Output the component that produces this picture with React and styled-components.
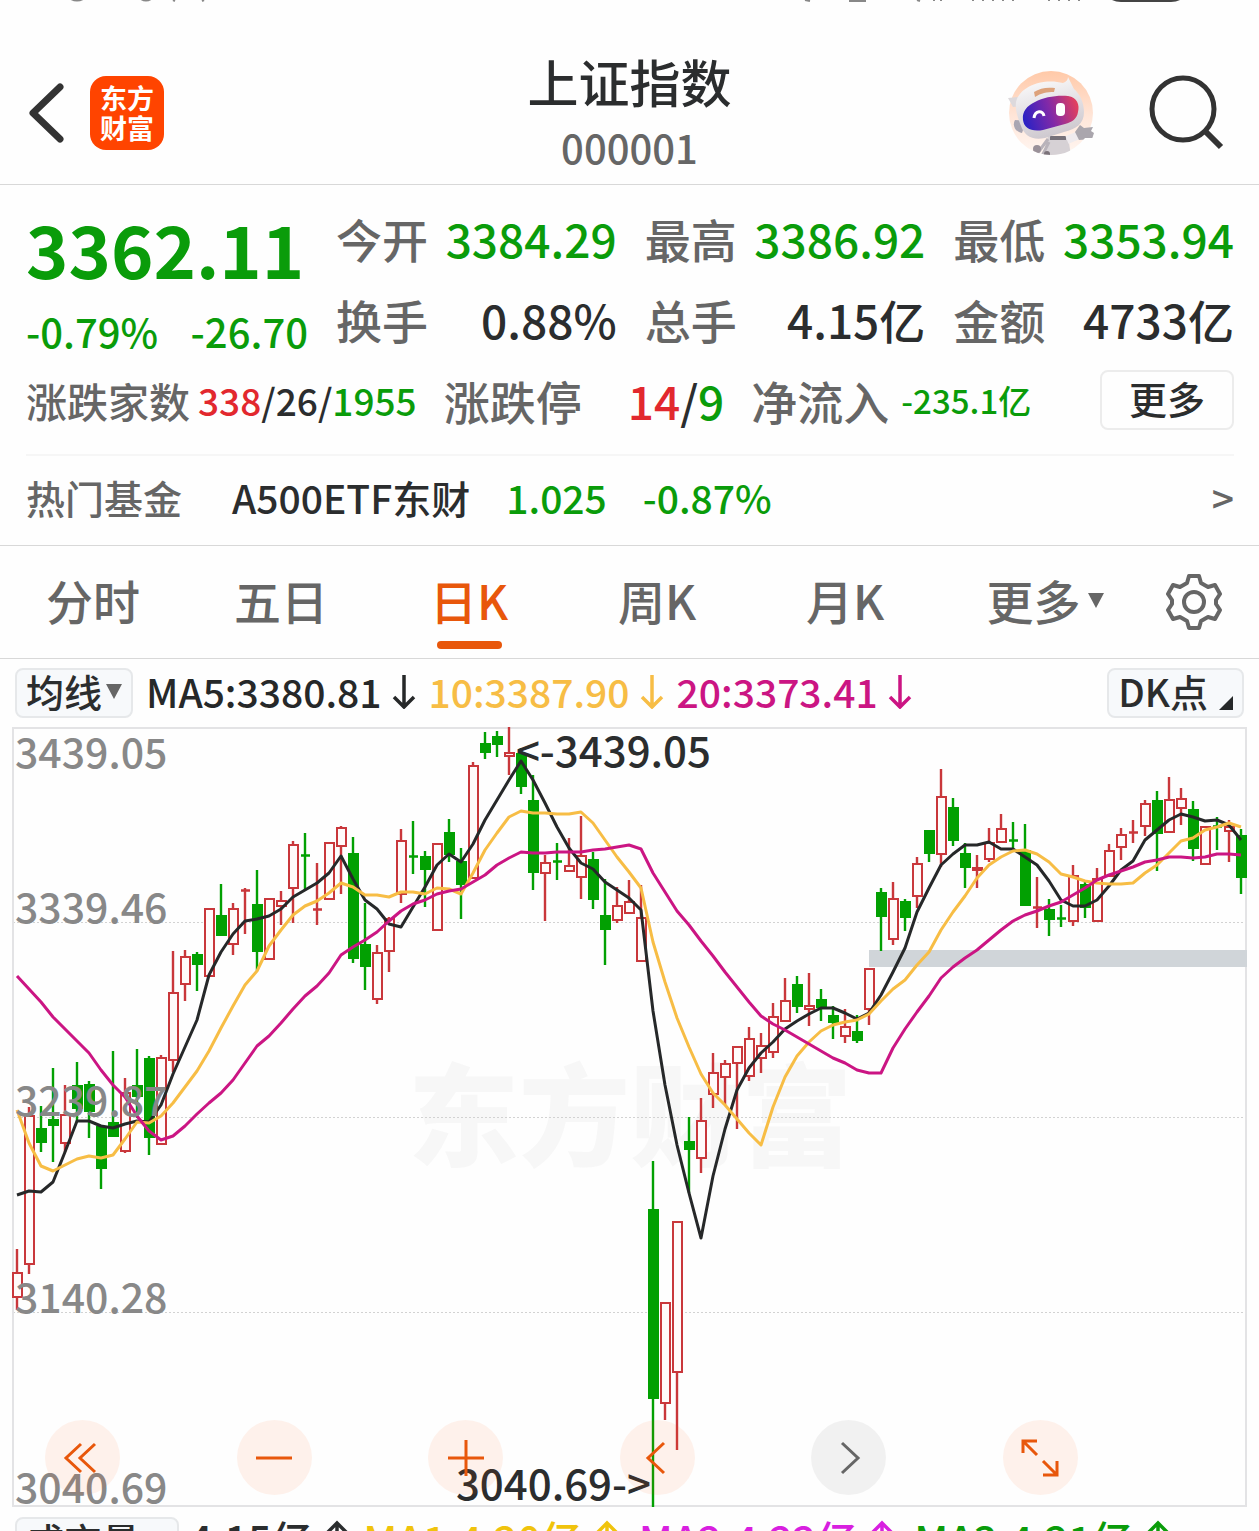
import { useState } from "react";
import { styled, createGlobalStyle } from "styled-components";

const GlobalStyle = createGlobalStyle`
	* {
		box-sizing: border-box;
	}
	body {
		margin: 0;
		background: #fefefe;
		color: #2b2d2e;
		font-family: "Noto Sans CJK SC", "Noto Sans", sans-serif;
		font-weight: 500;
	}
	button {
		font: inherit;
		color: inherit;
		background: none;
		border: 0;
		padding: 0;
		cursor: pointer;
	}
	svg {
		display: block;
	}
`;

const COLORS = {
	up: "#e2282e",
	down: "#0a9c0a",
	text: "#2b2d2e",
	label: "#666666",
	accent: "#e8570b",
	ma5: "#262829",
	ma10: "#f7bd45",
	ma20: "#cb1583",
};

const Page = styled.div`
	height: 100vh;
	overflow: hidden;
`;

const StatusBar = styled.div`
	display: flex;
	justify-content: space-between;
	height: 3px;
	overflow: hidden;
	padding: 0 78px 0 68px;
`;

const Header = styled.header`
	display: grid;
	grid-template-columns: 1fr auto 1fr;
	align-items: center;
	padding: 46px 26px 8px;
	border-bottom: 1px solid #d8d8d8;
`;

const HeaderSide = styled.div`
	display: flex;
	align-items: center;
	justify-content: ${(props) => (props.$end ? "flex-end" : "flex-start")};
	gap: ${(props) => (props.$end ? "54px" : "22px")};
	padding-right: ${(props) => (props.$end ? "8px" : "0")};
`;

const Logo = styled.a`
	width: 74px;
	height: 74px;
	padding-top: 7px;
	border-radius: 16px;
	background: #ff4400;
	color: white;
	font-size: 27px;
	font-weight: 700;
	line-height: 30px;
	text-align: center;
	text-decoration: none;
`;

const Heading = styled.div`
	padding-bottom: 5px;
	text-align: center;
`;

const Title = styled.h1`
	margin: 0 0 10px;
	font-size: 51px;
	font-weight: 500;
	line-height: 64px;
`;

const Code = styled.div`
	color: #666666;
	font-size: 40px;
	line-height: 48px;
`;

const Quote = styled.section`
	padding: 13px 25px 0 26px;
	border-bottom: 1px solid #d8d8d8;
`;

const Summary = styled.div`
	display: grid;
	grid-template-columns: 282px 1fr;
	gap: 28px;
`;

const Price = styled.div`
	margin: 10px 0 14px;
	color: ${COLORS.down};
	font-size: 72px;
	font-weight: 700;
	line-height: 80px;
`;

const Change = styled.div`
	display: flex;
	justify-content: space-between;
	color: ${COLORS.down};
	font-size: 40px;
	line-height: 58px;
`;

const Stats = styled.dl`
	display: grid;
	grid-template-columns: repeat(3, 1fr);
	column-gap: 28px;
	margin: 0;
	font-size: 46px;
	line-height: 81px;
`;

const Stat = styled.div`
	display: flex;
	justify-content: space-between;
	white-space: nowrap;
`;

const Label = styled.dt`
	color: ${COLORS.label};
`;

const Value = styled.dd`
	margin: 0;
	color: ${(props) => COLORS[props.$tone || "text"]};
`;

const Breadth = styled.div`
	display: flex;
	align-items: center;
	height: 80px;
	margin-bottom: 14px;
	white-space: nowrap;
`;

const BreadthItem = styled.div`
	display: flex;
	align-items: center;
	gap: ${(props) => props.$gap}px;
	margin-right: 27px;
	font-size: ${(props) => props.$size}px;
`;

const Figure = styled.span`
	font-size: ${(props) => props.$size}px;
	color: ${(props) => COLORS[props.$tone || "text"]};
`;

const MoreButton = styled.button`
	width: 134px;
	height: 60px;
	margin-left: auto;
	padding-bottom: 5px;
	border: 2px solid #ececec;
	border-radius: 8px;
	font-size: 38px;
	line-height: 50px;
`;

const Fund = styled.a`
	display: flex;
	align-items: center;
	height: 91px;
	padding-bottom: 8px;
	border-top: 2px solid #f6f6f6;
	color: ${COLORS.text};
	font-size: 39px;
	text-decoration: none;
`;

const FundLabel = styled.span`
	margin-right: 50px;
	color: ${COLORS.label};
`;

const FundValue = styled.span`
	margin-left: 36px;
	color: ${COLORS.down};
`;

const FundArrow = styled.span`
	margin-left: auto;
	color: ${COLORS.label};
`;

const Tabs = styled.nav`
	display: grid;
	grid-template-columns: repeat(5, 188fr) 212fr 107fr;
	height: 113px;
	border-bottom: 1px solid #d8d8d8;
`;

const Tab = styled.button`
	position: relative;
	display: flex;
	align-items: center;
	justify-content: center;
	gap: 7px;
	padding: 0 2px 5px 0;
	font-size: 47px;
	color: ${(props) => (props.$active ? COLORS.accent : COLORS.label)};
	&::after {
		content: "";
		display: ${(props) => (props.$active ? "block" : "none")};
		position: absolute;
		bottom: 9px;
		width: 65px;
		height: 8px;
		border-radius: 4px;
		background: ${COLORS.accent};
	}
`;

const GearButton = styled.button`
	padding-left: 14px;
`;

const Toolbar = styled.div`
	display: flex;
	align-items: center;
	height: 68px;
	padding: 0 15px;
	font-size: 39px;
	white-space: nowrap;
`;

const Chip = styled.button`
	display: flex;
	align-items: center;
	justify-content: center;
	gap: ${(props) => props.$gap || 4}px;
	height: 50px;
	padding: 0 9px 5px;
	border: 2px solid #e6e8ea;
	border-radius: 8px;
	background: #f7f9fb;
	font-size: 38px;
	line-height: 42px;
`;

const Average = styled.span`
	display: flex;
	align-items: center;
	gap: 10px;
	margin-left: 13px;
	padding-bottom: 5px;
	color: ${(props) => props.$color};
`;

const Push = styled.div`
	margin-left: auto;
`;

const ChartArea = styled.div`
	position: relative;
	margin: 0 12px;
`;

const ChartSvg = styled.svg`
	width: 100%;
	height: auto;
`;

const Controls = styled.div`
	position: absolute;
	left: 0;
	right: 0;
	bottom: 12px;
	display: flex;
	justify-content: space-between;
	padding: 0 169px 0 33px;
`;

const RoundButton = styled.button`
	display: grid;
	place-items: center;
	width: 75px;
	height: 75px;
	border-radius: 50%;
	color: ${(props) => (props.$muted ? "#666666" : COLORS.accent)};
	background: ${(props) =>
		props.$muted ? "rgba(0, 0, 0, 0.05)" : "rgba(255, 90, 10, 0.08)"};
`;

const VolumeBar = styled.div`
	display: flex;
	align-items: flex-start;
	margin-top: 10px;
	padding: 0 15px;
	font-size: 41px;
	line-height: 42px;
	white-space: nowrap;
`;

const VolumeValue = styled.span`
	display: flex;
	align-items: center;
	gap: 13px;
	margin-left: ${(props) => props.$gap}px;
	color: ${(props) => props.$color};
`;

const STATS = [
	{ label: "今开", value: "3384.29", tone: "down" },
	{ label: "最高", value: "3386.92", tone: "down" },
	{ label: "最低", value: "3353.94", tone: "down" },
	{ label: "换手", value: "0.88%" },
	{ label: "总手", value: "4.15亿" },
	{ label: "金额", value: "4733亿" },
];

const TABS = ["分时", "五日", "日K", "周K", "月K", "更多"];

// high, body top, body bottom, low, rising (1) or falling (0)
const CANDLES = [
	[1249, 1272, 1297, 1310, 1], [1107, 1115, 1264, 1274, 1],
	[1106, 1128, 1142, 1152, 0], [1068, 1119, 1125, 1162, 0],
	[1085, 1114, 1143, 1152, 1], [1062, 1085, 1108, 1122, 0],
	[1081, 1084, 1111, 1138, 0], [1126, 1126, 1168, 1189, 0],
	[1051, 1122, 1136, 1137, 0], [1078, 1092, 1151, 1153, 1],
	[1049, 1085, 1096, 1118, 0], [1056, 1058, 1137, 1155, 0],
	[1055, 1057, 1144, 1144, 1], [951, 992, 1060, 1072, 1],
	[950, 956, 984, 1001, 1], [952, 954, 964, 991, 0],
	[908, 908, 976, 976, 1], [884, 915, 935, 935, 0],
	[903, 908, 944, 955, 1], [888, 890, 891, 934, 1],
	[870, 904, 951, 971, 0], [898, 898, 959, 959, 1],
	[891, 900, 906, 925, 1], [841, 844, 888, 923, 1],
	[833, 855, 856, 890, 0], [863, 909, 910, 925, 1],
	[842, 842, 899, 899, 1], [826, 827, 846, 894, 1],
	[837, 853, 958, 963, 0], [903, 944, 966, 990, 0],
	[945, 952, 999, 1004, 1], [917, 918, 951, 972, 1],
	[829, 840, 894, 903, 1], [821, 856, 857, 874, 0],
	[851, 856, 869, 907, 0], [843, 843, 930, 930, 1],
	[819, 832, 854, 862, 0], [848, 861, 884, 919, 0],
	[762, 765, 878, 878, 1], [732, 743, 752, 759, 0],
	[731, 736, 744, 757, 0], [727, 752, 756, 775, 1],
	[748, 753, 786, 794, 0], [775, 800, 872, 890, 0],
	[855, 862, 873, 921, 1], [843, 861, 863, 880, 0],
	[838, 865, 871, 872, 1], [816, 855, 877, 899, 1],
	[852, 859, 899, 909, 0], [879, 915, 929, 965, 0],
	[887, 905, 920, 923, 1], [880, 901, 913, 914, 1],
	[885, 917, 961, 961, 1], [1161, 1209, 1398, 1507, 0],
	[1302, 1302, 1403, 1420, 1], [1221, 1221, 1372, 1450, 1],
	[1117, 1141, 1149, 1193, 0], [1098, 1120, 1158, 1173, 1],
	[1053, 1072, 1094, 1108, 1], [1060, 1063, 1077, 1105, 1],
	[1046, 1046, 1063, 1129, 1], [1027, 1038, 1076, 1081, 1],
	[1033, 1045, 1058, 1073, 1], [1003, 1016, 1052, 1058, 1],
	[978, 1000, 1021, 1021, 1], [976, 984, 1006, 1013, 0],
	[973, 1005, 1009, 1026, 1], [989, 999, 1007, 1021, 0],
	[1006, 1015, 1022, 1039, 0], [1009, 1026, 1036, 1043, 1],
	[1015, 1031, 1040, 1043, 0], [968, 968, 1009, 1025, 1],
	[888, 892, 916, 951, 0], [882, 898, 939, 945, 1],
	[899, 901, 917, 931, 0], [857, 863, 896, 908, 1],
	[830, 830, 853, 862, 0], [769, 796, 854, 867, 1],
	[798, 807, 840, 846, 0], [843, 853, 867, 888, 0],
	[855, 867, 870, 888, 1], [828, 842, 859, 862, 1],
	[814, 828, 842, 842, 1], [822, 840, 841, 850, 0],
	[824, 850, 905, 905, 0], [877, 907, 908, 928, 1],
	[899, 909, 919, 936, 0], [905, 918, 920, 927, 0],
	[865, 875, 921, 926, 1], [882, 884, 907, 918, 0],
	[868, 878, 921, 921, 1], [844, 850, 876, 876, 1],
	[828, 834, 847, 860, 1], [820, 832, 834, 843, 1],
	[800, 803, 826, 836, 1], [791, 800, 833, 871, 0],
	[777, 799, 832, 832, 1], [788, 798, 808, 825, 1],
	[801, 809, 848, 861, 0], [826, 826, 864, 864, 1],
	[817, 826, 827, 850, 0], [820, 826, 831, 862, 1],
	[829, 835, 877, 894, 0],
];

const MA5 = [
	1195, 1191, 1192, 1182, 1152, 1121, 1121, 1126, 1128, 1124, 1121, 1122, 1105,
	1074, 1047, 1020, 975, 952, 934, 921, 919, 916, 909, 897, 890, 883, 873, 856,
	879, 900, 909, 924, 927, 907, 887, 865, 854, 862, 844, 820, 800, 780, 761,
	780, 803, 827, 848, 863, 869, 882, 890, 898, 910, 1011, 1085, 1145, 1193,
	1238, 1176, 1129, 1090, 1068, 1053, 1042, 1029, 1021, 1014, 1008, 1008, 1013,
	1019, 1013, 995, 972, 948, 912, 888, 865, 854, 845, 845, 842, 849, 849, 857,
	865, 881, 900, 906, 906, 900, 886, 870, 861, 840, 830, 820, 814, 817, 821,
	820, 825, 840,
];

const MA10 = [
	1110, 1143, 1166, 1171, 1165, 1159, 1156, 1158, 1155, 1139, 1122, 1123, 1116,
	1103, 1087, 1071, 1051, 1028, 1006, 985, 971, 946, 930, 915, 906, 901, 893,
	883, 887, 895, 895, 897, 892, 892, 894, 888, 889, 894, 873, 850, 833, 817,
	811, 813, 813, 814, 814, 812, 823, 840, 857, 872, 888, 942, 982, 1018, 1047,
	1074, 1093, 1105, 1119, 1133, 1145, 1107, 1077, 1056, 1042, 1031, 1025, 1022,
	1020, 1014, 1001, 989, 980, 965, 952, 930, 912, 896, 878, 865, 857, 851, 850,
	854, 862, 874, 877, 881, 883, 884, 884, 883, 873, 865, 853, 841, 838, 830,
	827, 823, 827,
];

const MA20 = [
	976, 989, 1002, 1017, 1029, 1041, 1053, 1070, 1085, 1097, 1116, 1131, 1140,
	1136, 1126, 1114, 1103, 1093, 1080, 1063, 1046, 1036, 1023, 1009, 996, 986,
	973, 955, 947, 940, 932, 921, 911, 904, 900, 894, 891, 889, 882, 875, 865,
	858, 852, 853, 853, 852, 852, 852, 850, 849, 847, 845, 849, 873, 892, 911,
	925, 941, 956, 972, 987, 1002, 1016, 1024, 1030, 1037, 1044, 1051, 1058, 1063,
	1070, 1073, 1073, 1048, 1029, 1012, 996, 978, 967, 958, 950, 940, 930, 921,
	915, 911, 906, 902, 895, 888, 880, 875, 871, 867, 862, 860, 857, 857, 858,
	857, 854, 854, 855,
];

const AXIS = [
	{ y: 768, text: "3439.05" },
	{ y: 923, text: "3339.46" },
	{ y: 1116, text: "3239.87" },
	{ y: 1313, text: "3140.28" },
	{ y: 1503, text: "3040.69" },
];

const xAt = (index) => 17 + index * 12;
const toPoints = (values) =>
	values.map((y, index) => `${xAt(index)},${y}`).join(" ");

function Caret() {
	return (
		<svg width="16" height="16" viewBox="0 0 16 16" fill="#666666">
			<path d="M0 1h16L8 16z" />
		</svg>
	);
}

function Arrow({ up }) {
	return (
		<svg
			width="24"
			height="36"
			viewBox="0 0 24 36"
			fill="none"
			stroke="currentColor"
			strokeWidth="3.5"
		>
			<path d={up ? "M12 36V3M2 13 12 3l10 10" : "M12 2v33M2 24l10 10 10-10"} />
		</svg>
	);
}

function Robot() {
	return (
		<svg width="88" height="86" viewBox="0 0 88 86">
			<defs>
				<linearGradient id="halo" x1="0" y1="0" x2="0" y2="1">
					<stop offset="0" stopColor="#ffc9a8" />
					<stop offset="0.55" stopColor="#ffe6d9" />
					<stop offset="1" stopColor="#fff6f1" />
				</linearGradient>
				<linearGradient id="visor" x1="0" y1="0.6" x2="1" y2="0.4">
					<stop offset="0" stopColor="#2b22c4" />
					<stop offset="0.5" stopColor="#8129a8" />
					<stop offset="1" stopColor="#e2405f" />
				</linearGradient>
				<linearGradient id="shell" x1="0" y1="0" x2="0.3" y2="1">
					<stop offset="0" stopColor="#ffffff" />
					<stop offset="1" stopColor="#cfcad0" />
				</linearGradient>
				<clipPath id="haloClip">
					<path d="M0 0h88v68H78A42 42 0 0 1 10 62H0z" />
					<circle cx="44" cy="43" r="42" />
				</clipPath>
			</defs>
			<circle cx="44" cy="43" r="42" fill="url(#halo)" />
			<g clipPath="url(#haloClip)">
				<path d="M41 66h20l3 20H36z" fill="#d6d1d5" />
				<path d="M43 66h16v4H43z" fill="#77727a" />
				<path d="M41 69 30 84M35 86l7-14" stroke="#b9b3ba" strokeWidth="3" />
				<circle cx="30" cy="79" r="4" fill="#9a9199" />
				<circle cx="40" cy="84" r="3" fill="#7b7279" />
				<path d="M60 70l12-5" stroke="#efebee" strokeWidth="8" />
				<path d="M68 62l5-7 4 3 9-1-2 4 3 2-2 6-13 1z" fill="#aaa6ad" />
				<path d="M1 28l10-1 3 9-8 1z" fill="#ddd9dc" />
				<path d="M8 50c-3 5 0 12 7 13l4-12z" fill="#aaa6b2" />
				<path
					d="M9 32C13 15 38 8 56 13c3-1 5-3 5-6l6 12c6 5 10 14 10 23 0 12-8 17-20 20L38 68C25 71 17 65 14 56 11 48 8 41 9 32z"
					fill="url(#shell)"
				/>
				<path d="M27 22c6-4 13-5 21-4l-1 4c-7 0-13 1-19 5z" fill="#dda27b" />
				<path
					d="M28 32c9-5 22-7 33-6 9 1 12 9 10 16-1 7-6 10-13 12l-22 6C24 62 17 58 16 50c-1-9 4-14 12-18z"
					fill="url(#visor)"
				/>
				<path
					d="M27 48c1-8 9-8 10-2"
					fill="none"
					stroke="#ffffff"
					strokeWidth="3"
				/>
				<rect x="49" y="33" width="9" height="13" rx="4" fill="#ffffff" />
			</g>
		</svg>
	);
}

function Gear() {
	return (
		<svg
			width="56"
			height="58"
			viewBox="0 0 56 58"
			fill="none"
			stroke="#666666"
			strokeWidth="4"
			strokeLinejoin="round"
		>
			<path d="M23 3h10l2 7 7 4 7-2 5 9-4 6v4l4 6-5 9-7-2-7 4-2 7H23l-2-7-7-4-7 2-5-9 4-6v-4l-4-6 5-9 7 2 7-4z" />
			<circle cx="28" cy="29" r="10" />
		</svg>
	);
}

function Chart() {
	return (
		<ChartSvg viewBox="12 727 1235 780" role="img" aria-label="日K">
			<text
				x="630"
				y="1158"
				textAnchor="middle"
				fontSize="111"
				fontWeight="900"
				fill="#f7f7f7"
			>
				东方财富
			</text>
			<g stroke="#d2d2d2" strokeDasharray="2 2">
				{[922, 1117, 1312].map((y) => (
					<line key={y} x1="13" x2="1246" y1={y + 0.5} y2={y + 0.5} />
				))}
			</g>
			<rect x="13" y="728" width="1233" height="778" fill="none" stroke="#e3e3e5" strokeWidth="2" />
			<rect x="869" y="950" width="378" height="17" fill="#d0d5d9" />
			{CANDLES.map(([high, top, bottom, low, rising], index) => {
				const x = xAt(index);
				const color = rising ? "#c9373b" : "#02a002";
				const flat = bottom - top < 3;
				return (
					<g key={index} stroke={color} strokeWidth="2.4">
						{flat ? (
							<path d={`M${x} ${high}V${low}M${x - 4} ${top + 0.5}h9`} />
						) : (
							<>
								<path d={`M${x} ${high}V${top}M${x} ${bottom}V${low}`} />
								<rect
									x={x - 4}
									y={top + 1}
									width="9"
									height={bottom - top - 1}
									strokeWidth="2"
									fill={rising ? "#fffafa" : color}
									stroke={color}
								/>
							</>
						)}
					</g>
				);
			})}
			<g fill="none" strokeWidth="3" strokeLinejoin="round">
				<polyline points={toPoints(MA5)} stroke={COLORS.ma5} />
				<polyline points={toPoints(MA10)} stroke={COLORS.ma10} />
				<polyline points={toPoints(MA20)} stroke={COLORS.ma20} />
			</g>
			<g fontSize="41" fill="#888888">
				{AXIS.map((tick) => (
					<text key={tick.text} x="15" y={tick.y}>
						{tick.text}
					</text>
				))}
			</g>
			<g fontSize="42" fill={COLORS.text}>
				<text x="711" y="767" textAnchor="end">
					&lt;-3439.05
				</text>
				<text x="651" y="1500" textAnchor="end">
					3040.69-&gt;
				</text>
			</g>
		</ChartSvg>
	);
}

const CONTROLS = [
	{ name: "最早", path: "M18 6 3 20l15 14M32 6 17 20l15 14" },
	{ name: "缩小", path: "M2 20h36" },
	{ name: "放大", path: "M2 20h36M20 2v36" },
	{ name: "左移", path: "M27 5 11 20l16 15" },
	{ name: "右移", path: "M13 5l16 15-16 15", muted: true },
	{ name: "全屏", path: "M3 15V3h14M3 3l14 14M37 23v14H23M37 37 23 23" },
];

function App() {
	const [tab, setTab] = useState("日K");

	return (
		<Page>
			<GlobalStyle />
			<StatusBar aria-hidden="true">
				<svg width="140" height="3" viewBox="0 0 140 3" fill="none" stroke="#888888" strokeWidth="2">
					<path d="M3 -1q6 3 12 0M73 -1q5 3 10 0M105 0l2 1M136 0l-2 1" />
				</svg>
				<svg width="380" height="3" viewBox="0 0 380 3">
					<path
						d="M4 0l5 1M48 1h17M116 0l3 1M133 0v1M140 0v1M172 0v1M182 0v1M192 0v1M202 0v1M212 0v1M248 0v1M258 0v1M268 0v1M278 0v1"
						stroke="#888888"
						strokeWidth="2"
					/>
					<path d="M311 0h68q-4 2-9 2h-50q-5 0-9-2z" fill="#444444" />
				</svg>
			</StatusBar>
			<Header>
				<HeaderSide>
					<button aria-label="返回">
						<svg width="42" height="64" viewBox="0 0 42 64" fill="none" stroke="#333333" strokeWidth="7" strokeLinecap="round" strokeLinejoin="round">
							<path d="M34 6 7 32l27 26" />
						</svg>
					</button>
					<Logo href="#home">
						东方
						<br />
						财富
					</Logo>
				</HeaderSide>
				<Heading>
					<Title>上证指数</Title>
					<Code>000001</Code>
				</Heading>
				<HeaderSide $end>
					<button aria-label="智能助手">
						<Robot />
					</button>
					<button aria-label="搜索">
						<svg width="76" height="76" viewBox="0 0 76 76" fill="none" stroke="#333333" strokeWidth="5">
							<circle cx="34" cy="34" r="31" />
							<path d="m56 56 16 16" strokeWidth="6" />
						</svg>
					</button>
				</HeaderSide>
			</Header>
			<Quote>
				<Summary>
					<div>
						<Price>3362.11</Price>
						<Change>
							<span>-0.79%</span>
							<span>-26.70</span>
						</Change>
					</div>
					<Stats>
						{STATS.map((stat) => (
							<Stat key={stat.label}>
								<Label>{stat.label}</Label>
								<Value $tone={stat.tone}>{stat.value}</Value>
							</Stat>
						))}
					</Stats>
				</Summary>
				<Breadth>
					<BreadthItem $gap={8} $size={41}>
						<Figure $tone="label" $size={41}>涨跌家数</Figure>
						<Figure $size={37}>
							<Figure $tone="up" $size={37}>338</Figure>/26/
							<Figure $tone="down" $size={37}>1955</Figure>
						</Figure>
					</BreadthItem>
					<BreadthItem $gap={46} $size={46}>
						<Figure $tone="label" $size={46}>涨跌停</Figure>
						<Figure $size={46}>
							<Figure $tone="up" $size={46}>14</Figure>/
							<Figure $tone="down" $size={46}>9</Figure>
						</Figure>
					</BreadthItem>
					<BreadthItem $gap={12} $size={46}>
						<Figure $tone="label" $size={46}>净流入</Figure>
						<Figure $tone="down" $size={33}>-235.1亿</Figure>
					</BreadthItem>
					<MoreButton>更多</MoreButton>
				</Breadth>
				<Fund href="#fund">
					<FundLabel>热门基金</FundLabel>
					A500ETF东财
					<FundValue>1.025</FundValue>
					<FundValue>-0.87%</FundValue>
					<FundArrow>&gt;</FundArrow>
				</Fund>
			</Quote>
			<Tabs>
				{TABS.map((name) => (
					<Tab key={name} $active={tab === name} onClick={() => setTab(name)}>
						{name}
						{name === "更多" && <Caret />}
					</Tab>
				))}
				<GearButton aria-label="设置">
					<Gear />
				</GearButton>
			</Tabs>
			<Toolbar>
				<Chip>
					均线
					<Caret />
				</Chip>
				<Average $color={COLORS.ma5}>
					MA5:3380.81
					<Arrow />
				</Average>
				<Average $color={COLORS.ma10}>
					10:3387.90
					<Arrow />
				</Average>
				<Average $color={COLORS.ma20}>
					20:3373.41
					<Arrow />
				</Average>
				<Push>
					<Chip $gap={11}>
						DK点
						<svg width="14" height="38" viewBox="0 0 14 38" fill="#262829">
							<path d="M14 24v14H0z" />
						</svg>
					</Chip>
				</Push>
			</Toolbar>
			<ChartArea>
				<Chart />
				<Controls>
					{CONTROLS.map((control) => (
						<RoundButton
							key={control.name}
							aria-label={control.name}
							$muted={control.muted}
						>
							<svg width="40" height="40" viewBox="0 0 40 40" fill="none" stroke="currentColor" strokeWidth="3">
								<path d={control.path} />
							</svg>
						</RoundButton>
					))}
				</Controls>
			</ChartArea>
			<VolumeBar>
				<Chip $gap={12}>
					成交量
					<Caret />
				</Chip>
				<VolumeValue $gap={10} $color={COLORS.text}>
					4.15亿
					<Arrow up />
				</VolumeValue>
				<VolumeValue $gap={14} $color="#f0c30c">
					MA1:4.20亿
					<Arrow up />
				</VolumeValue>
				<VolumeValue $gap={20} $color="#d81fe0">
					MA2:4.22亿
					<Arrow up />
				</VolumeValue>
				<VolumeValue $gap={20} $color="#0a9c0a">
					MA3:4.21亿
					<Arrow up />
				</VolumeValue>
			</VolumeBar>
		</Page>
	);
}

export default App;
